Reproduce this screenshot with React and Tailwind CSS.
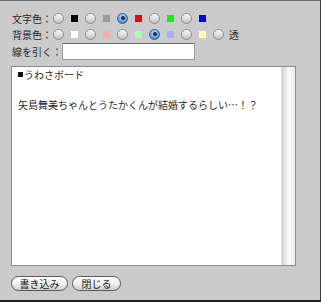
import React from 'react';

const Radio = ({ checked }) => (
    <span
        className={
            checked
                ? 'flex items-center justify-center w-[11px] h-[11px] rounded-full border border-[#35609a] bg-[radial-gradient(circle_at_50%_35%,#d6ecff,#5f9fe0_60%,#2f6cb8)] shrink-0'
                : 'block w-[11px] h-[11px] rounded-full border border-[#8a8a8a] bg-gradient-to-b from-[#f6f6f6] via-[#e2e2e2] to-[#c4c4c4] shrink-0'
        }
    >
        {checked && <span className="block w-[4px] h-[4px] rounded-full bg-[#1b2e4c]" />}
    </span>
);

const Swatch = ({ color }) => (
    <span className="block w-[7px] h-[7px] ml-[7px] mr-[7px] shrink-0" style={{ backgroundColor: color }} />
);

const ColorRow = ({ label, colors, checkedIndex, transparent }) => (
    <div className="flex items-center h-[16px]">
        <span className="w-[41px]">{label}</span>
        {colors.map((c, i) => (
            <React.Fragment key={c}>
                <Radio checked={i === checkedIndex} />
                <Swatch color={c} />
            </React.Fragment>
        ))}
        {transparent && (
            <>
                <Radio checked={false} />
                <span className="ml-[5px]">透</span>
            </>
        )}
    </div>
);

const App = () => {
    return (
        <div
            className="w-[321px] h-[302px] bg-[#cbcbcb] border-t border-t-[#6a6a6a] border-r border-r-[#3a3a3a] border-b-2 border-b-[#1e1e1e] text-[10px] text-[#2a2a2a] overflow-hidden"
            style={{ fontFamily: '"Noto Sans CJK JP", sans-serif' }}
        >
            <div className="pl-[12px] pt-[9px]">
                <ColorRow label="文字色：" colors={['#000000', '#9a9a9a', '#ff0000', '#00ff00', '#0000ff']} checkedIndex={2} />
                <ColorRow label="背景色：" colors={['#ffffff', '#ffaaaa', '#aaffaa', '#aaaaff', '#ffffaa']} checkedIndex={3} transparent />
                <div className="flex items-center h-[17px] mt-[1px]">
                    <span className="w-[50px]">線を引く：</span>
                    <input
                        type="text"
                        className="w-[133px] h-[17px] bg-white border border-[#9a9a9a] border-t-[#6e6e6e] outline-none"
                    />
                </div>
            </div>

            <div className="ml-[11px] mt-[6px] w-[285px] h-[200px] border border-[#8c8c8c] bg-white flex">
                <div className="flex-1 pl-[6px] pt-[0px] leading-[15px]">
                    <p className="flex items-center">
                        <span className="inline-block w-[5px] h-[5px] bg-[#111] mr-[1px]" />
                        うわさボード
                    </p>
                    <p>&nbsp;</p>
                    <p>矢島舞美ちゃんとうたかくんが結婚するらしい…！？</p>
                </div>
                <div className="w-[14px] h-full bg-gradient-to-r from-[#d2d2d2] via-[#fbfbfb] to-[#ececec] border-l border-l-[#e0e0e0]" />
            </div>

            <div className="flex gap-[4px] ml-[11px] mt-[10px]">
                <button className="w-[57px] h-[15px] rounded-full border border-[#5a5a5a] bg-gradient-to-b from-white via-[#f0f0f0] to-[#cfcfcf] text-[10px] leading-[12px] text-[#222] flex items-center justify-center">
                    書き込み
                </button>
                <button className="w-[49px] h-[15px] rounded-full border border-[#5a5a5a] bg-gradient-to-b from-white via-[#f0f0f0] to-[#cfcfcf] text-[10px] leading-[12px] text-[#222] flex items-center justify-center">
                    閉じる
                </button>
            </div>
        </div>
    );
};

export default App;
